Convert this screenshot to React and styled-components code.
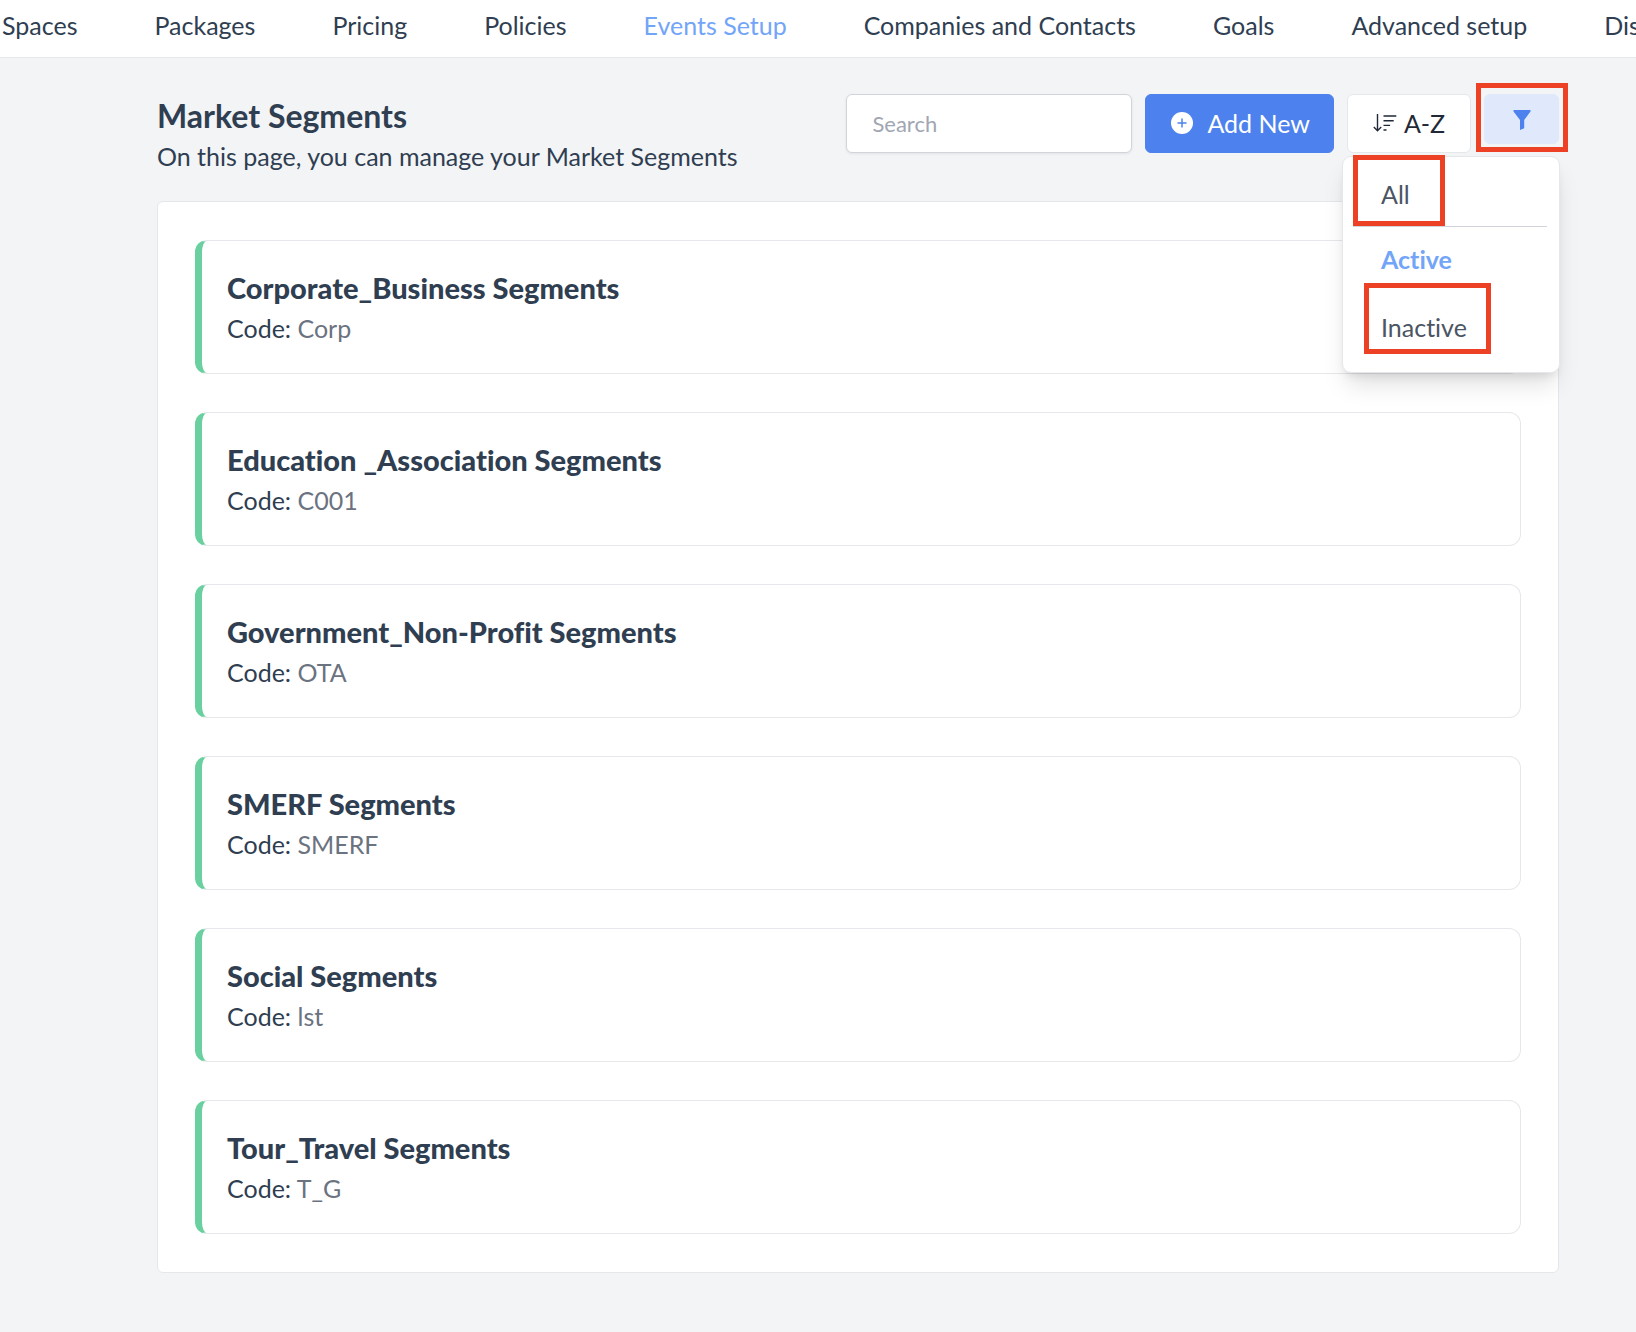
import React, { useState } from 'react';
import styled, { createGlobalStyle } from 'styled-components';

const GlobalStyle = createGlobalStyle`
  *, *::before, *::after {
    box-sizing: border-box;
  }

  body {
    margin: 0;
    background: #f3f4f6;
    color: #2f3e51;
    font-family: Lato, "Liberation Sans", sans-serif;
    font-size: 25px;
    line-height: 38px;
    font-variant-ligatures: no-common-ligatures;
  }

  button, input {
    font: inherit;
    font-variant-ligatures: inherit;
    color: inherit;
  }
`;

const Nav = styled.nav`
  display: flex;
  gap: 77px;
  height: 58px;
  padding: 6px 2px 0;
  overflow: hidden;
  background: #fff;
  border-bottom: 1px solid #e5e7eb;
`;

const NavLink = styled.a`
  flex: none;
  color: ${({ $active }) => ($active ? '#72a5f8' : 'inherit')};
  text-decoration: none;
  white-space: nowrap;
`;

const Page = styled.main`
  padding: 36px 77px 60px 157px;
`;

const Header = styled.header`
  display: flex;
  justify-content: space-between;
  align-items: flex-start;
  margin-bottom: 26px;
`;

const Title = styled.h1`
  margin: 0;
  font-size: 32px;
  line-height: 43px;
  font-weight: 700;
`;

const Subtitle = styled.p`
  margin: 0;
`;

const Toolbar = styled.div`
  display: flex;
  align-items: flex-start;
  gap: 13px;
`;

const Search = styled.input`
  width: 286px;
  height: 59px;
  padding: 0 25px;
  font-size: 22px;
  background: #fff;
  border: 1px solid #d1d5db;
  border-radius: 6px;
  box-shadow: 0 1px 3px rgba(0, 0, 0, .08);

  &::placeholder {
    color: #a1a6b2;
    opacity: 1;
  }
`;

const Button = styled.button`
  display: flex;
  align-items: center;
  height: 59px;
  padding: 0 25px 2px;
  border: 1px solid #e5e7eb;
  border-radius: 6px;
  background: #fff;
  color: #1f2937;
  white-space: nowrap;
  cursor: pointer;
`;

const AddButton = styled(Button)`
  gap: 14px;
  padding-right: 23px;
  border-color: #4d82ee;
  background: #4d82ee;
  color: #fff;
`;

const SortButton = styled(Button)`
  gap: 7px;
`;

const FilterButton = styled(Button)`
  justify-content: center;
  width: 75px;
  height: 50px;
  padding: 2px 0 0;
  border-color: #dfe9fb;
  background: #dfe9fb;
`;

const Filter = styled.div`
  position: relative;
`;

const Mark = styled.span`
  position: absolute;
  inset: ${({ $inset }) => $inset};
  border: 5px solid #ec4125;
  pointer-events: none;
`;

const Menu = styled.ul`
  position: absolute;
  top: 62px;
  right: -1px;
  z-index: 1;
  width: 218px;
  margin: 0;
  padding: 5px 0 13px;
  list-style: none;
  background: #fff;
  border: 1px solid #e5e7eb;
  border-radius: 9px;
  box-shadow: 0 16px 24px -5px rgba(0, 0, 0, .13), 0 6px 10px -4px rgba(0, 0, 0, .1);
`;

const MenuRow = styled.li`
  position: relative;

  &:first-child::after {
    content: '';
    display: block;
    height: 1px;
    margin: 0 12px 0 10px;
    background: #d1d5db;
  }

  &:last-child {
    margin-top: 4px;
  }
`;

const MenuItem = styled.button`
  display: block;
  width: 100%;
  padding: 13px 38px;
  border: 0;
  background: none;
  color: ${({ $active }) => ($active ? '#72a5f8' : '#4b5563')};
  font-weight: ${({ $active }) => ($active ? 700 : 400)};
  text-align: left;
  cursor: pointer;
`;

const Panel = styled.ul`
  display: flex;
  flex-direction: column;
  gap: 38px;
  margin: 0;
  padding: 38px 37px;
  list-style: none;
  background: #fff;
  border: 1px solid #e5e7eb;
  border-radius: 6px;
`;

const Card = styled.li`
  padding: 26px 25px;
  border: 1px solid #e5e7eb;
  border-left: 7px solid #6bd09f;
  border-radius: 12px;
`;

const CardName = styled.h2`
  margin: 0;
  font-size: 29px;
  line-height: 42px;
  font-weight: 900;
`;

const CardCode = styled.p`
  margin: 0;
`;

const CodeValue = styled.span`
  color: #6b7280;
`;

const PlusIcon = () => (
  <svg width="22" height="22" viewBox="0 0 22 22" aria-hidden="true">
    <circle cx="11" cy="11" r="11" fill="#fff" />
    <path d="M11 6.5v9M6.5 11h9" stroke="#4d82ee" strokeWidth="1.5" />
  </svg>
);

const SortIcon = () => (
  <svg width="24" height="20" viewBox="0 0 24 20" fill="none" stroke="currentColor" strokeWidth="1.4" aria-hidden="true">
    <path d="M4.5 1v16.4M.8 14l3.7 3.7L8.2 14" />
    <path d="M10.5 3h12.8M10.5 7.8h10.2M10.5 12.4h6.6M10.5 17h3" />
  </svg>
);

const FunnelIcon = () => (
  <svg width="18" height="22" viewBox="0 0 18 22" fill="#4d82ee" aria-hidden="true">
    <path d="M.5 1h17v1.6L11.2 11v8.2L7 21V11L.5 2.6z" />
  </svg>
);

const links = [
  'Spaces',
  'Packages',
  'Pricing',
  'Policies',
  'Events Setup',
  'Companies and Contacts',
  'Goals',
  'Advanced setup',
  'Discounts',
];

const filters = [
  { name: 'All', mark: '-7px 114px 1px 10px' },
  { name: 'Active' },
  { name: 'Inactive', mark: '-12px 68px 5px 21px' },
];

const segments = [
  { name: 'Corporate_Business Segments', code: 'Corp' },
  { name: 'Education _Association Segments', code: 'C001' },
  { name: 'Government_Non-Profit Segments', code: 'OTA' },
  { name: 'SMERF Segments', code: 'SMERF' },
  { name: 'Social Segments', code: 'lst' },
  { name: 'Tour_Travel Segments', code: 'T_G' },
];

const App = () => {
  const [filter, setFilter] = useState('Active');
  const [open, setOpen] = useState(true);

  return (
    <>
      <GlobalStyle />
      <Nav>
        {links.map(_ => <NavLink key={_} href="#" $active={_ === 'Events Setup'}>{_}</NavLink>)}
      </Nav>
      <Page>
        <Header>
          <div>
            <Title>Market Segments</Title>
            <Subtitle>On this page, you can manage your Market Segments</Subtitle>
          </div>
          <Toolbar>
            <Search type="text" placeholder="Search" aria-label="Search" />
            <AddButton type="button"><PlusIcon />Add New</AddButton>
            <SortButton type="button"><SortIcon />A-Z</SortButton>
            <Filter>
              <FilterButton type="button" aria-label="Filter" aria-expanded={open} onClick={() => setOpen(!open)}>
                <FunnelIcon />
              </FilterButton>
              <Mark $inset="-11px -9px -8px -8px" />
              {open && (
                <Menu>
                  {filters.map(({ name, mark }) => (
                    <MenuRow key={name}>
                      <MenuItem type="button" $active={name === filter} onClick={() => setFilter(name)}>
                        {name}
                      </MenuItem>
                      {mark && <Mark $inset={mark} />}
                    </MenuRow>
                  ))}
                </Menu>
              )}
            </Filter>
          </Toolbar>
        </Header>
        <Panel>
          {segments.map(({ name, code }) => (
            <Card key={name}>
              <CardName>{name}</CardName>
              <CardCode>Code: <CodeValue>{code}</CodeValue></CardCode>
            </Card>
          ))}
        </Panel>
      </Page>
    </>
  );
};

export default App;
